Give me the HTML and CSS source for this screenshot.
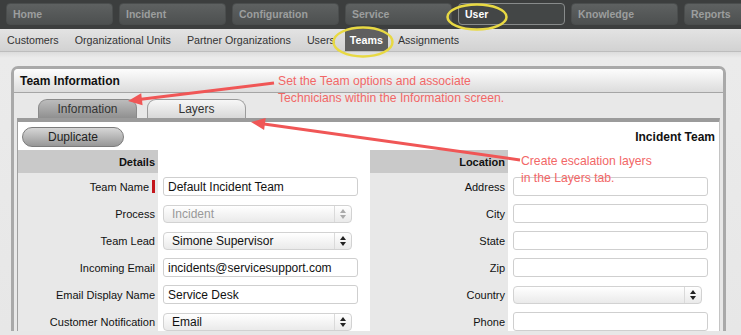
FILE: index.html
```html
<!DOCTYPE html>
<html lang="en">
<head>
    <meta charset="UTF-8">
    <meta name="viewport" content="width=device-width, initial-scale=1.0">
    <title>Teams - Team Information</title>
    <link rel="stylesheet" href="styles.css">
</head>
<body>
    <div class="topnav">
        <a href="#">Home</a>
        <a href="#">Incident</a>
        <a href="#">Configuration</a>
        <a href="#">Service</a>
        <a href="#" class="active">User</a>
        <a href="#">Knowledge</a>
        <a href="#">Reports</a>
    </div>
    <div class="subnav">
        <a href="#">Customers</a>
        <a href="#">Organizational Units</a>
        <a href="#">Partner Organizations</a>
        <a href="#">Users</a>
        <a href="#" class="active">Teams</a>
        <a href="#">Assignments</a>
    </div>

    <div class="main">
        <div class="panel">
            <div class="panel-head">Team Information</div>
            <div class="tabs">
                <div class="tab active">Information</div>
                <div class="tab">Layers</div>
            </div>
            <div class="content">
                <div class="toolbar">
                    <button class="btn">Duplicate</button>
                    <h2>Incident Team</h2>
                </div>
                <div class="form">
                    <div class="section details">
                        <div class="lbl sec-head">Details</div>
                        <div class="field"></div>

                        <div class="lbl">Team Name<span class="req"></span></div>
                        <div class="field"><input class="input" type="text" value="Default Incident Team"></div>

                        <div class="lbl">Process</div>
                        <div class="field">
                            <div class="select disabled"><span>Incident</span><span class="arrows"><svg width="6" height="10" viewBox="0 0 6 10"><path d="M3 0L6 4H0Z M3 10L0 6H6Z"/></svg></span></div>
                        </div>

                        <div class="lbl">Team Lead</div>
                        <div class="field">
                            <div class="select"><span>Simone Supervisor</span><span class="arrows"><svg width="6" height="10" viewBox="0 0 6 10"><path d="M3 0L6 4H0Z M3 10L0 6H6Z"/></svg></span></div>
                        </div>

                        <div class="lbl">Incoming Email</div>
                        <div class="field"><input class="input" type="text" value="incidents@servicesupport.com"></div>

                        <div class="lbl">Email Display Name</div>
                        <div class="field"><input class="input" type="text" value="Service Desk"></div>

                        <div class="lbl">Customer Notification</div>
                        <div class="field">
                            <div class="select"><span>Email</span><span class="arrows"><svg width="6" height="10" viewBox="0 0 6 10"><path d="M3 0L6 4H0Z M3 10L0 6H6Z"/></svg></span></div>
                        </div>
                    </div>

                    <div class="section location">
                        <div class="lbl sec-head">Location</div>
                        <div class="field"></div>

                        <div class="lbl">Address</div>
                        <div class="field"><input class="input" type="text"></div>

                        <div class="lbl">City</div>
                        <div class="field"><input class="input" type="text"></div>

                        <div class="lbl">State</div>
                        <div class="field"><input class="input" type="text"></div>

                        <div class="lbl">Zip</div>
                        <div class="field"><input class="input" type="text"></div>

                        <div class="lbl">Country</div>
                        <div class="field">
                            <div class="select"><span></span><span class="arrows"><svg width="6" height="10" viewBox="0 0 6 10"><path d="M3 0L6 4H0Z M3 10L0 6H6Z"/></svg></span></div>
                        </div>

                        <div class="lbl">Phone</div>
                        <div class="field"><input class="input" type="text"></div>
                    </div>
                </div>
            </div>
        </div>
    </div>

    <!-- callouts drawn over the screen -->
    <div class="overlay">
        <svg class="marks" width="741" height="335" viewBox="0 0 741 335">
            <ellipse cx="477" cy="17" rx="29.5" ry="12.5" class="ring"/>
            <ellipse cx="363" cy="42" rx="29.5" ry="14.5" class="ring"/>
            <line x1="274" y1="83" x2="141" y2="99.3" class="arrow-line"/>
            <polygon points="128,101 142.6,105.3 141.2,93.3" class="arrow-head"/>
            <line x1="520" y1="160" x2="264" y2="124" class="arrow-line"/>
            <polygon points="251,122 265.7,118.1 264.1,129.9" class="arrow-head"/>
        </svg>
        <div class="note note-info">Set the Team options and associate<br>Technicians within the Information screen.</div>
        <div class="note note-layers">Create escalation layers<br>in the Layers tab.</div>
    </div>
</body>
</html>
```

FILE: styles.css
```css
html {
    overflow: hidden;
}
body {
    margin: 0;
    width: 741px;
    height: 335px;
    overflow: hidden;
    position: relative;
    font-family: "Liberation Sans", Arial, sans-serif;
    background-color: #e7e7e7;
}
.topnav {
    display: flex;
    gap: 6px;
    height: 29px;
    box-sizing: border-box;
    padding: 3px 0 0 6px;
    background-color: #3c3e3e;
    overflow: hidden;
}
.topnav a {
    flex: 0 0 107px;
    height: 22px;
    box-sizing: border-box;
    padding-left: 6px;
    display: flex;
    align-items: center;
    border: 1px solid #4a4d4d;
    border-radius: 4px;
    background: linear-gradient(#5e6161, #4d5050);
    color: #9c9e9e;
    font-size: 10.5px;
    font-weight: bold;
    text-decoration: none;
}
.topnav a.active {
    background: #434646;
    border-color: #888b8b;
    color: #fff;
}
.subnav {
    display: flex;
    gap: 4px;
    height: 23px;
    box-sizing: border-box;
    padding-left: 1px;
    background: linear-gradient(#e3e3e3, #d2d2d2);
    border-bottom: 1px solid #bdbdbd;
}
.subnav a {
    display: flex;
    align-items: center;
    padding: 0 6px;
    font-size: 10.7px;
    color: #333;
    text-decoration: none;
}
.subnav a.active {
    padding: 0 5px;
    background-color: #5f5f5f;
    color: #fff;
    font-weight: bold;
}
.main {
    padding: 14px 15px 0 11px;
    background: linear-gradient(#dcdcdc, #ebebeb 6px, #e7e7e7);
}
.panel {
    border: 3px solid #a9a9a9;
    border-bottom: none;
    border-radius: 7px 7px 0 0;
    background-color: #e8e8e8;
}
.panel-head {
    height: 23px;
    display: flex;
    align-items: center;
    padding-left: 6px;
    font-size: 12px;
    font-weight: bold;
    color: #111;
    background: linear-gradient(#fdfdfd, #dcdcdc);
    border-bottom: 1px solid #a5a5a5;
    border-radius: 4px 4px 0 0;
}
.tabs {
    display: flex;
    gap: 10px;
    padding: 6px 0 0 24px;
}
.tab {
    width: 99px;
    height: 19px;
    box-sizing: border-box;
    display: flex;
    align-items: center;
    justify-content: center;
    border: 1px solid #9c9c9c;
    border-bottom: none;
    border-radius: 9px 9px 0 0;
    background: linear-gradient(#f7f7f7, #d8d8d8);
    font-size: 12px;
    color: #333;
}
.tab.active {
    background: linear-gradient(#bcbcbc, #909090);
    border-color: #8a8a8a;
}
.content {
    margin: 0 3px;
    height: 209px;
    overflow: hidden;
    background-color: #fff;
    border-top: 4px solid #9b9b9b;
    border-left: 1px solid #a0a0a0;
    border-right: 1px solid #c4c4c4;
}
.toolbar {
    display: flex;
    justify-content: space-between;
    align-items: center;
    padding: 5px 4px 0 4px;
}
.btn {
    width: 102px;
    height: 20px;
    padding: 0;
    border: 1px solid #7c7c7c;
    border-radius: 10px;
    background: linear-gradient(#d6d6d6, #979797);
    font-family: "Liberation Sans", Arial, sans-serif;
    font-size: 12px;
    color: #222;
}
.toolbar h2 {
    margin: 0;
    font-size: 12px;
    font-weight: bold;
    color: #111;
}
.form {
    display: flex;
    margin-top: 3px;
}
.section {
    display: grid;
    grid-template-columns: 140px 1fr;
    grid-template-rows: 23px;
    grid-auto-rows: 27px;
}
.details {
    width: 352px;
}
.location {
    flex: 1;
    grid-template-columns: 138px 1fr;
}
.lbl {
    display: flex;
    align-items: center;
    justify-content: flex-end;
    padding-right: 3px;
    background-color: #e8e8e8;
    font-size: 11px;
    color: #111;
}
.lbl.sec-head {
    background-color: #c9c9c9;
    font-weight: bold;
}
.req {
    display: inline-block;
    width: 3px;
    height: 13px;
    margin-left: 3px;
    background-color: #c4161c;
}
.field {
    display: flex;
    align-items: center;
    padding-left: 5px;
}
.input {
    width: 195px;
    height: 19px;
    box-sizing: border-box;
    margin: 0;
    padding: 0 4px;
    border: 1px solid #cfcfcf;
    border-radius: 3px;
    font-family: "Liberation Sans", Arial, sans-serif;
    font-size: 12px;
    color: #111;
    background: #fff;
}
.select {
    width: 189px;
    height: 18px;
    box-sizing: border-box;
    display: flex;
    align-items: center;
    justify-content: space-between;
    border: 1px solid #d2d2d2;
    border-radius: 4px;
    background: linear-gradient(#ffffff, #eaeaea);
    font-size: 12px;
    color: #111;
}
.select span:first-child {
    padding-left: 8px;
}
.select .arrows {
    width: 16px;
    height: 100%;
    display: flex;
    align-items: center;
    justify-content: center;
    border-left: 1px solid #dadada;
}
.select .arrows svg {
    fill: #222;
}
.select.disabled {
    color: #999;
}
.select.disabled .arrows svg {
    fill: #aaa;
}
.overlay {
    position: absolute;
    top: 0;
    left: 0;
    width: 741px;
    height: 335px;
    pointer-events: none;
}
.marks {
    position: absolute;
    top: 0;
    left: 0;
}
.ring {
    fill: none;
    stroke: #e8d943;
    stroke-width: 2.5;
}
.arrow-line {
    stroke: #f05656;
    stroke-width: 3;
}
.arrow-head {
    fill: #f05656;
}
.note {
    position: absolute;
    font-size: 12.2px;
    line-height: 17px;
    color: #f26767;
    white-space: nowrap;
}
.note-info {
    left: 278px;
    top: 73px;
}
.note-layers {
    left: 521px;
    top: 153px;
}
```
